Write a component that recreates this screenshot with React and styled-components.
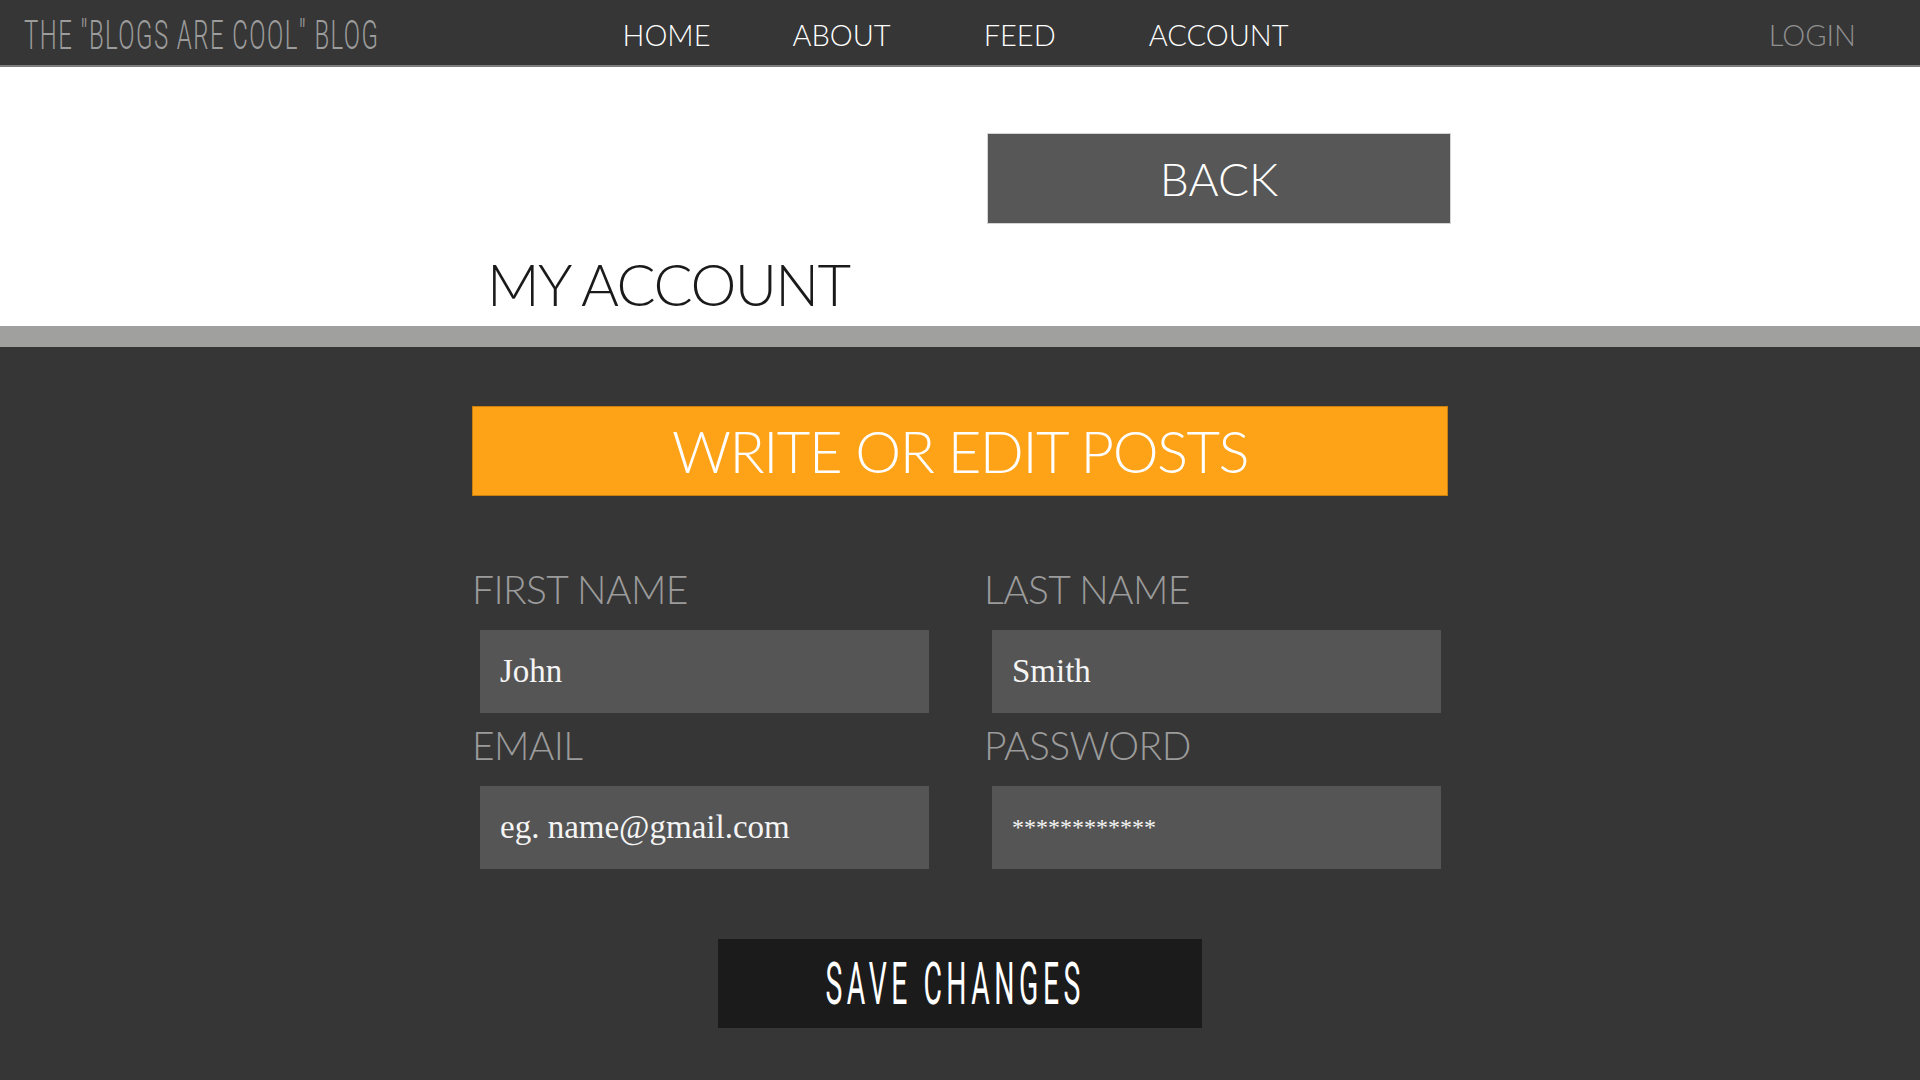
import React from 'react';
import styled, { createGlobalStyle } from 'styled-components';

const GlobalStyle = createGlobalStyle`
  html, body {
    margin: 0;
    padding: 0;
    background: #363636;
  }
  * {
    box-sizing: border-box;
  }
`;

const Page = styled.div`
  min-height: 100vh;
  display: flex;
  flex-direction: column;
  font-family: Lato, 'Open Sans', sans-serif;
`;

const NavBar = styled.header`
  height: 67px;
  display: grid;
  grid-template-columns: minmax(0, 1fr) auto minmax(0, 1fr);
  align-items: center;
  background: #363636;
  border-bottom: 2px solid #7c7c7c;
`;

const Brand = styled.div`
  justify-self: start;
  padding-left: 24px;
  padding-top: 5px;
`;

const BrandText = styled.span`
  display: inline-block;
  font-family: Roboto, sans-serif;
  font-weight: 300;
  font-size: 41px;
  line-height: 1;
  letter-spacing: 0.06em;
  color: #9c9c9c;
  white-space: nowrap;
  transform: scaleX(0.585);
  transform-origin: left center;
`;

const Links = styled.nav`
  display: flex;
  gap: 93px;
  padding-top: 4px;
  margin-right: 9px;
`;

const NavLink = styled.a`
  font-weight: 300;
  font-size: 29px;
  line-height: 1;
  margin-right: ${p => p.$pull || 0}px;
  color: ${p => (p.muted ? '#8f8f8f' : '#ffffff')};
  text-decoration: none;
  cursor: pointer;
`;

const LoginWrap = styled.div`
  justify-self: end;
  padding-right: 64px;
  padding-top: 4px;
`;

const Header = styled.section`
  height: 259px;
  background: #ffffff;
  padding-top: 66px;
`;

const Container = styled.div`
  width: 976px;
  margin: 0 auto;
`;

const BackRow = styled.div`
  display: flex;
  justify-content: flex-end;
  margin-right: -3px;
`;

const BackButton = styled.button`
  width: 464px;
  height: 91px;
  display: flex;
  align-items: center;
  justify-content: center;
  background: #575757;
  border: 1px solid #d4d4d4;
  color: #ffffff;
  font-family: Lato, sans-serif;
  font-weight: 300;
  font-size: 46px;
  line-height: 1;
  cursor: pointer;
`;

const Heading = styled.h1`
  margin: 31px 0 0;
  padding-left: 15px;
  font-weight: 300;
  font-size: 58px;
  line-height: 1;
  letter-spacing: -1.6px;
  color: #1a1a1a;
`;

const Band = styled.div`
  height: 21px;
  background: #a0a09e;
`;

const Main = styled.main`
  flex: 1;
  background: #363636;
  padding-top: 59px;
  padding-bottom: 53px;
`;

const PostsBar = styled.button`
  width: 100%;
  height: 90px;
  display: flex;
  align-items: center;
  justify-content: center;
  background: #fea218;
  border: 1px solid #c9800f;
  color: #ffffff;
  font-family: Lato, sans-serif;
  font-weight: 300;
  font-size: 58px;
  line-height: 1;
  letter-spacing: -1.5px;
  cursor: pointer;
`;

const FormGrid = styled.div`
  display: grid;
  grid-template-columns: 464px 464px;
  column-gap: 48px;
  row-gap: 13px;
  margin-top: 74px;
`;

const Field = styled.label`
  display: flex;
  flex-direction: column;
  gap: 21px;
`;

const Label = styled.span`
  font-weight: 300;
  font-size: 39px;
  line-height: 1;
  letter-spacing: -0.6px;
  color: #9b9b9b;
`;

const TextInput = styled.input`
  width: 449px;
  height: 83px;
  margin-left: 8px;
  padding: 0 20px;
  background: #555555;
  border: none;
  outline: none;
  color: #f4f4f4;
  font-family: 'Liberation Serif', 'DejaVu Serif', serif;
  font-size: ${p => p.$size || 33}px;
`;

const SaveRow = styled.div`
  display: flex;
  justify-content: center;
  margin-top: 70px;
`;

const SaveButton = styled.button`
  width: 484px;
  height: 89px;
  display: flex;
  align-items: center;
  justify-content: center;
  background: #1b1b1b;
  border: none;
  cursor: pointer;
  overflow: hidden;
`;

const SaveText = styled.span`
  display: inline-block;
  margin-right: 10px;
  font-family: Roboto, sans-serif;
  font-weight: 400;
  font-size: 59px;
  line-height: 1;
  letter-spacing: 0.16em;
  color: #ffffff;
  white-space: nowrap;
  transform: scaleX(0.48);
`;

const fields = [
  { label: 'FIRST NAME', value: 'John' },
  { label: 'LAST NAME', value: 'Smith' },
  { label: 'EMAIL', value: 'eg. name@gmail.com' },
  { label: 'PASSWORD', value: '************', size: 24 },
];

export default function App() {
  return (
    <Page>
      <GlobalStyle />
      <NavBar>
        <Brand>
          <BrandText>{'THE "BLOGS ARE COOL" BLOG'}</BrandText>
        </Brand>
        <Links>
          <NavLink $pull={-11}>HOME</NavLink>
          <NavLink>ABOUT</NavLink>
          <NavLink>FEED</NavLink>
          <NavLink>ACCOUNT</NavLink>
        </Links>
        <LoginWrap>
          <NavLink muted>LOGIN</NavLink>
        </LoginWrap>
      </NavBar>
      <Header>
        <Container>
          <BackRow>
            <BackButton>BACK</BackButton>
          </BackRow>
          <Heading>MY ACCOUNT</Heading>
        </Container>
      </Header>
      <Band />
      <Main>
        <Container>
          <PostsBar>WRITE OR EDIT POSTS</PostsBar>
          <FormGrid>
            {fields.map(f => (
              <Field key={f.label}>
                <Label>{f.label}</Label>
                <TextInput defaultValue={f.value} $size={f.size} />
              </Field>
            ))}
          </FormGrid>
          <SaveRow>
            <SaveButton>
              <SaveText>SAVE CHANGES</SaveText>
            </SaveButton>
          </SaveRow>
        </Container>
      </Main>
    </Page>
  );
}
